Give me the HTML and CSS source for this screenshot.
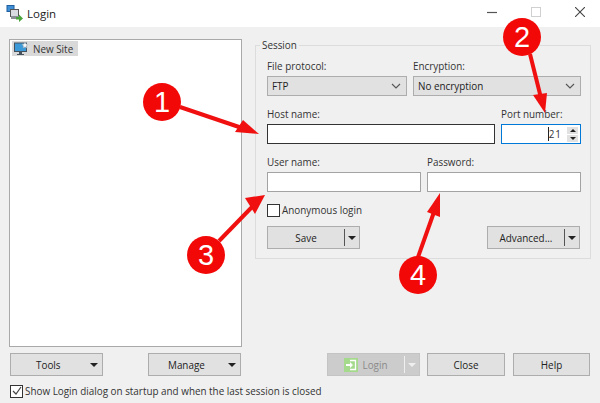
FILE: index.html
```html
<!DOCTYPE html>
<html lang="en">
<head>
    <meta charset="UTF-8">
    <title>Login</title>
    <link rel="stylesheet" href="styles.css">
</head>
<body>
    <div class="titlebar">
        <svg class="app-icon" width="17" height="17" viewBox="0 0 17 17">
            <rect x="1" y="0.5" width="7" height="6" fill="#3f8fd6" stroke="#1f5f9e"/>
            <rect x="4.5" y="4.5" width="8" height="7" fill="#d9dde2" stroke="#555"/>
            <rect x="5" y="11" width="8" height="3" fill="#8b9097"/>
            <path d="M10 12h3V9.5l4 4-4 3.5v-2.5h-3z" fill="#49a53b"/>
        </svg>
        <span class="title">Login</span>
        <div class="window-buttons">
            <span class="win-btn"><svg width="10" height="10" viewBox="0 0 10 10"><path d="M0 5.5h10" stroke="#555" stroke-width="1.2"/></svg></span>
            <span class="win-btn"><svg width="10" height="10" viewBox="0 0 10 10"><rect x="0.5" y="0.5" width="9" height="9" fill="none" stroke="#d0d0d0"/></svg></span>
            <span class="win-btn"><svg width="10" height="10" viewBox="0 0 10 10"><path d="M0 0l10 10M10 0L0 10" stroke="#444" stroke-width="1.1"/></svg></span>
        </div>
    </div>

    <div class="main">
        <div class="site-tree">
            <div class="site-item">
                <svg width="15" height="14" viewBox="0 0 15 14">
                    <rect x="0.5" y="1" width="12" height="8.5" fill="#3d9ad8" stroke="#45525e"/>
                    <path d="M5 10h3v2H5zM3 12h7v1H3z" fill="#45525e"/>
                    <path d="M11 0l1 2 2 .5-1.500 1.500.5 2-2-1-2 1 .5-2L8 2.500 10 2z" fill="#f4f6f8" stroke="#9aa4ad" stroke-width="0.5"/>
                </svg>
                <span>New Site</span>
            </div>
        </div>

        <fieldset class="session">
            <legend>Session</legend>
            <div class="row">
                <div class="field w-protocol">
                    <label>File protocol:</label>
                    <div class="select">FTP<svg class="chevron" width="10" height="6" viewBox="0 0 10 6"><path d="M1 1l4 4 4-4" fill="none" stroke="#555" stroke-width="1.1"/></svg></div>
                </div>
                <div class="field w-encryption">
                    <label>Encryption:</label>
                    <div class="select">No encryption<svg class="chevron" width="10" height="6" viewBox="0 0 10 6"><path d="M1 1l4 4 4-4" fill="none" stroke="#555" stroke-width="1.1"/></svg></div>
                </div>
            </div>
            <div class="row">
                <div class="field w-host">
                    <label>Host name:</label>
                    <div class="input input-dark"></div>
                </div>
                <div class="field w-port">
                    <label>Port number:</label>
                    <div class="input input-focus">
                        <span class="caret-bar"></span><span class="port-value">21</span>
                        <div class="spinner">
                            <span class="spin-btn"><i class="tri-up"></i></span>
                            <span class="spin-btn"><i class="tri-down"></i></span>
                        </div>
                    </div>
                </div>
            </div>
            <div class="row">
                <div class="field w-user">
                    <label>User name:</label>
                    <div class="input"></div>
                </div>
                <div class="field w-pass">
                    <label>Password:</label>
                    <div class="input"></div>
                </div>
            </div>
            <div class="check-row anon">
                <span class="checkbox"></span>
                <span>Anonymous login</span>
            </div>
            <div class="session-buttons">
                <div class="btn split">
                    <span class="btn-label">Save</span>
                    <span class="divider"></span>
                    <i class="tri-down big"></i>
                </div>
                <div class="btn split">
                    <span class="btn-label">Advanced...</span>
                    <span class="divider"></span>
                    <i class="tri-down big"></i>
                </div>
            </div>
        </fieldset>
    </div>

    <div class="actions">
        <div class="btn tool"><span class="btn-label">Tools</span><i class="tri-down big"></i></div>
        <div class="btn tool manage"><span class="btn-label">Manage</span><i class="tri-down big"></i></div>
        <div class="btn split login">
            <span class="btn-label">
                <svg width="14" height="14" viewBox="0 0 14 14">
                    <rect width="14" height="14" fill="#a5d98c"/>
                    <path d="M6 2.500h5.500v9H6" fill="none" stroke="#fff" stroke-width="1.300"/>
                    <path d="M2 6h4V4l3 3-3 3V8H2z" fill="#fff"/>
                </svg>
                Login
            </span>
            <span class="divider"></span>
            <i class="tri-down big"></i>
        </div>
        <div class="btn close">Close</div>
        <div class="btn help">Help</div>
    </div>

    <div class="check-row startup">
        <span class="checkbox">
            <svg width="10" height="10" viewBox="0 0 10 10"><path d="M1 5l3 3 5-7" fill="none" stroke="#444" stroke-width="1.200"/></svg>
        </span>
        <span>Show Login dialog on startup and when the last session is closed</span>
    </div>

    <svg class="callouts" width="600" height="403" viewBox="0 0 600 403">
        <path class="arrow-line" d="M180 107L242 128"/>
        <path class="arrow-head" d="M259 134L235 132L243 120z"/>
        <circle class="badge" cx="162" cy="102" r="19"/>
        <text class="badge-num" x="162" y="112">1</text>

        <path class="arrow-line" d="M530 54L541 98"/>
        <path class="arrow-head" d="M545 113L533 95L547 93z"/>
        <circle class="badge" cx="522" cy="37" r="19"/>
        <text class="badge-num" x="522" y="47">2</text>

        <path class="arrow-line" d="M219 241L252 207"/>
        <path class="arrow-head" d="M265 195L245 198L255 214z"/>
        <circle class="badge" cx="206" cy="255" r="19"/>
        <text class="badge-num" x="206" y="265">3</text>

        <path class="arrow-line" d="M417 260L434 212"/>
        <path class="arrow-head" d="M440 193L427 212L440 217z"/>
        <circle class="badge" cx="418" cy="275" r="19"/>
        <text class="badge-num" x="418" y="285">4</text>
    </svg>
</body>
</html>
```

FILE: styles.css
```css
* {
    box-sizing: border-box;
}
body {
    margin: 0;
    width: 600px;
    height: 403px;
    overflow: hidden;
    position: relative;
    background: #f0f0f0;
    color: #333;
    font-family: "Open Sans", Arial, sans-serif;
    font-size: 9.9px;
    line-height: 14px;
}
.titlebar {
    height: 27px;
    background: #fff;
    display: flex;
    align-items: center;
    padding-left: 6px;
}
.app-icon {
    margin-right: 4px;
}
.title {
    font-size: 11.5px;
    color: #222;
}
.window-buttons {
    margin-left: auto;
    margin-right: 15px;
    display: flex;
    gap: 34px;
    margin-top: -3px;
}
.win-btn {
    display: flex;
}
.main {
    display: flex;
    padding: 11px 9px 0 9px;
    gap: 13px;
}
.site-tree {
    width: 233px;
    height: 308px;
    margin-top: 1px;
    padding: 1px 2px;
    background: #fff;
    border: 1px solid #a9a9a9;
}
.site-item {
    width: 66px;
    height: 15px;
    display: flex;
    align-items: center;
    gap: 4px;
    padding-left: 2px;
    background: #d9d9d9;
}
.session {
    width: 336px;
    height: 221px;
    margin: 0;
    padding: 7px 9px 0 11px;
    border: 1px solid #dcdcdc;
    min-width: 0;
}
.session legend {
    padding: 0 2px;
    margin-left: -7px;
    line-height: 14px;
}
.row {
    display: flex;
    gap: 6px;
    margin-bottom: 11px;
}
.field label {
    display: block;
    margin-bottom: 3px;
}
.w-protocol { width: 140px; }
.w-encryption { width: 168px; }
.w-host { width: 228px; }
.w-port { width: 80px; }
.w-user { width: 154px; }
.w-pass { width: 154px; }
.select {
    height: 20px;
    display: flex;
    align-items: center;
    justify-content: space-between;
    padding: 0 4px;
    background: #e1e1e1;
    border: 1px solid #adadad;
    color: #222;
}
.chevron {
    margin-right: 1px;
}
.input {
    height: 20px;
    display: flex;
    align-items: center;
    justify-content: flex-end;
    background: #fff;
    border: 1px solid #a3a3a3;
}
.input-dark {
    border-color: #333;
}
.input-focus {
    border-color: #0078d7;
    padding-right: 2px;
}
.caret-bar {
    width: 1px;
    height: 14px;
    background: #222;
}
.port-value {
    margin-right: 5px;
    letter-spacing: 1px;
}
.spinner {
    width: 11px;
    display: flex;
    flex-direction: column;
    gap: 1px;
}
.spin-btn {
    height: 7px;
    background: #e1e1e1;
    display: flex;
    align-items: center;
    justify-content: center;
}
.tri-up {
    border-left: 3px solid transparent;
    border-right: 3px solid transparent;
    border-bottom: 3px solid #222;
}
.tri-down {
    border-left: 3px solid transparent;
    border-right: 3px solid transparent;
    border-top: 3px solid #222;
}
.tri-down.big {
    border-left-width: 4px;
    border-right-width: 4px;
    border-top-width: 4px;
}
.check-row {
    display: flex;
    align-items: center;
    gap: 2px;
}
.checkbox {
    width: 13px;
    height: 13px;
    display: flex;
    align-items: center;
    justify-content: center;
    background: #fff;
    border: 1px solid #333;
}
.anon {
    margin-top: 1px;
}
.session-buttons {
    display: flex;
    justify-content: space-between;
    width: 313px;
    margin-top: 9px;
}
.btn {
    width: 93px;
    height: 23px;
    display: flex;
    align-items: center;
    justify-content: center;
    background: #e1e1e1;
    border: 1px solid #adadad;
    color: #222;
}
.btn.split {
    padding: 0 3px 0 0;
}
.btn.split .btn-label {
    flex: 1;
    display: flex;
    align-items: center;
    justify-content: center;
    gap: 4px;
}
.divider {
    width: 1px;
    height: 17px;
    margin-right: 3px;
    background: #555;
}
.actions {
    display: flex;
    padding: 6px 10px 0 10px;
}
.btn.tool {
    justify-content: flex-start;
    padding: 0 4px 0 25px;
}
.btn.tool .btn-label {
    flex: 1;
}
.btn.manage {
    margin-left: 45px;
    padding-left: 19px;
}
.btn.login {
    margin-left: 86px;
    background: #cccccc;
    border-color: #c4c4c4;
    color: #8a8a8a;
}
.btn.login .divider {
    background: #efefef;
}
.btn.login .tri-down {
    border-top-color: #efefef;
}
.btn.close {
    width: 78px;
    margin-left: 7px;
}
.btn.help {
    width: 77px;
    margin-left: 8px;
}
.startup {
    margin: 8px 0 0 10px;
}
.callouts {
    position: absolute;
    left: 0;
    top: 0;
}
.arrow-line {
    stroke: #f01010;
    stroke-width: 4;
    fill: none;
}
.arrow-head {
    fill: #f01010;
}
.badge {
    fill: #f30808;
}
.badge-num {
    fill: #fff;
    font-family: "Liberation Sans", Arial, sans-serif;
    font-size: 29px;
    text-anchor: middle;
}
```
